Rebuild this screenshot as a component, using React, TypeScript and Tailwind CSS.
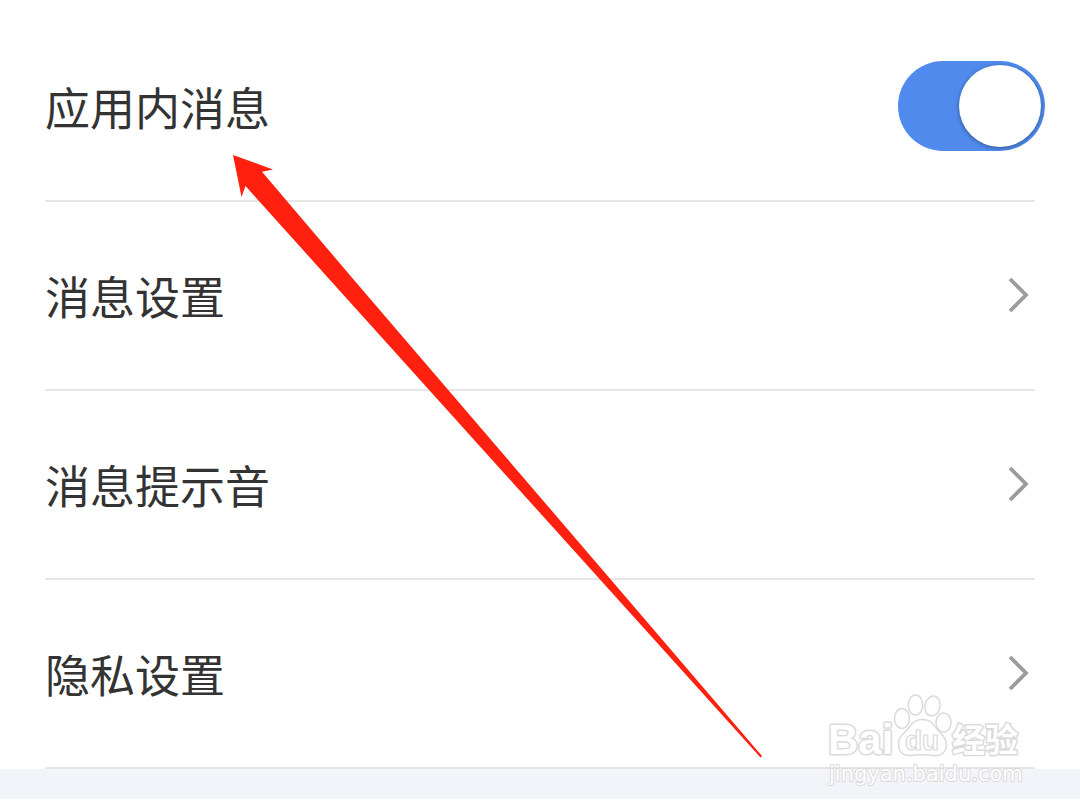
import { useState } from 'react';

const links = ['消息设置', '消息提示音', '隐私设置'];

function Chevron() {
  return (
    <svg className="w-7 h-10 shrink-0" viewBox="0 0 28 40" fill="none" aria-hidden="true">
      <path d="M3 3 L19 19 L3 35" stroke="#9b9ca0" strokeWidth="3.800" />
    </svg>
  );
}

function Arrow() {
  return (
    <svg
      className="absolute left-[232px] top-[154px] w-[532px] h-[605px] pointer-events-none"
      viewBox="0 0 532 605"
      aria-hidden="true"
    >
      <path
        d="M1 1 L41 15.500 L30 17.700 L122 126 L530 602 L528.500 603.500 L98 126 L13.500 32 L9.500 43 Z"
        fill="#ff2010"
      />
    </svg>
  );
}

function Watermark() {
  return (
    <svg
      className="absolute right-[50px] bottom-[6px] w-[210px] h-[104px] pointer-events-none"
      viewBox="820 689 210 104"
      fill="#ffffff"
      stroke="#dadada"
      strokeWidth="1.500"
      strokeLinejoin="round"
      aria-hidden="true"
    >
      <g
        fontFamily='"Liberation Sans", "Noto Sans CJK SC", sans-serif'
        fontWeight="700"
        paintOrder="stroke"
        strokeWidth="3"
      >
        <text x="828" y="754" fontSize="42">Bai</text>
        <text x="952" y="752" fontSize="33">经验</text>
      </g>
      {/* paw */}
      <ellipse cx="902" cy="718.500" rx="7.500" ry="10" />
      <ellipse cx="915.500" cy="705" rx="7.300" ry="10" />
      <ellipse cx="932.500" cy="706" rx="7.500" ry="10" transform="rotate(12 932.500 706)" />
      <ellipse cx="943.500" cy="722.500" rx="7.500" ry="9.500" />
      <path d="M922 719.500 C914 719.500 911 725 907 730 C902 735 898 738 898.500 745 C899 753 904 756 911 755.500 C918 754.500 926 754.500 933 755.500 C941 757 946 752 946.500 745 C947 738 941 734 937 729 C933 723 930 719.500 922 719.500 Z" />
      <text
        x="905"
        y="750"
        fontSize="28"
        fontFamily='"Liberation Sans", sans-serif'
        fontWeight="700"
        strokeWidth="1.200"
      >
        du
      </text>
      <text
        x="829"
        y="781"
        fontSize="21"
        fontFamily='"DejaVu Sans", sans-serif'
        strokeWidth="2"
        paintOrder="stroke"
      >
        jingyan.baidu.com
      </text>
    </svg>
  );
}

export default function App() {
  const [enabled, setEnabled] = useState(true);

  return (
    <main className='relative w-full bg-white pt-[13px] text-[45px] leading-[60px] text-[#333333] font-["Noto_Sans_CJK_SC",sans-serif]'>
      <div className="px-[45px]">
        <div className="flex items-center justify-between h-[189px] border-b-2 border-[#e6e6e6]">
          <label htmlFor="in-app">应用内消息</label>
          <input
            id="in-app"
            type="checkbox"
            role="switch"
            checked={enabled}
            onChange={(e) => setEnabled(e.target.checked)}
            className="appearance-none shrink-0 flex items-center w-[147px] h-[90px] -mr-[10px] mb-[2px] p-1 rounded-full bg-gray-300 checked:bg-[#4f8aec] checked:justify-end cursor-pointer before:block before:w-[82px] before:h-[82px] before:rounded-full before:bg-white before:shadow-[0_1px_4px_rgba(0,0,0,0.4)]"
          />
        </div>
        {links.map((label) => (
          <a
            key={label}
            href="#"
            className="flex items-center justify-between h-[189px] border-b-2 border-[#e6e6e6]"
          >
            <span>{label}</span>
            <Chevron />
          </a>
        ))}
      </div>
      <div className="h-[30px] bg-[#f3f4f9]" />
      <Arrow />
      <Watermark />
    </main>
  );
}
